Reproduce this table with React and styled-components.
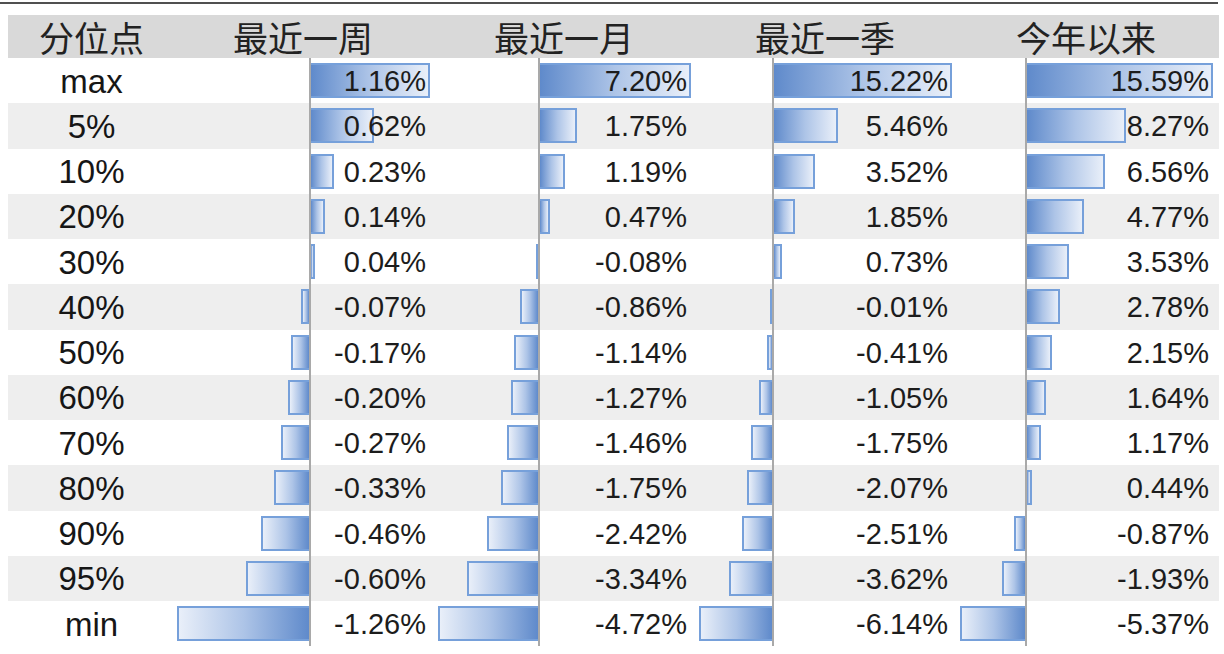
import React from "react";
import styled, { createGlobalStyle } from "styled-components";

const GlobalStyle = createGlobalStyle`
  html, body { margin: 0; padding: 0; background: #ffffff; }
  body { font-family: "Liberation Sans", Arial, sans-serif; }
`;

const LABELS = ["max", "5%", "10%", "20%", "30%", "40%", "50%", "60%", "70%", "80%", "90%", "95%", "min"];

const COLUMNS = [
  { title: "最近一周", values: [1.16, 0.62, 0.23, 0.14, 0.04, -0.07, -0.17, -0.2, -0.27, -0.33, -0.46, -0.6, -1.26] },
  { title: "最近一月", values: [7.2, 1.75, 1.19, 0.47, -0.08, -0.86, -1.14, -1.27, -1.46, -1.75, -2.42, -3.34, -4.72] },
  { title: "最近一季", values: [15.22, 5.46, 3.52, 1.85, 0.73, -0.01, -0.41, -1.05, -1.75, -2.07, -2.51, -3.62, -6.14] },
  { title: "今年以来", values: [15.59, 8.27, 6.56, 4.77, 3.53, 2.78, 2.15, 1.64, 1.17, 0.44, -0.87, -1.93, -5.37] },
];

const Page = styled.div`
  padding-top: 2px;
  width: 1224px;
`;

const TopRule = styled.div`
  width: 1218px;
  height: 2px;
  background: #505050;
`;

const Table = styled.div`
  margin: 11px 0 0 8px;
  width: 1211px;
  display: flex;
  flex-direction: column;
`;

const Row = styled.div`
  display: grid;
  grid-template-columns: 167px repeat(4, 261px);
  height: ${(p) => (p.$header ? "43px" : "45.25px")};
  background: ${(p) => (p.$header ? "#d9d9d9" : p.$shaded ? "#eeeeee" : "#ffffff")};
`;

const HeadCell = styled.div`
  display: flex;
  align-items: center;
  justify-content: center;
  padding-right: ${(p) => (p.$first ? "0" : "5px")};
  font-family: "Noto Sans CJK SC", "Liberation Sans", sans-serif;
  font-size: 35px;
  color: #222222;
  line-height: 1;
`;

const LabelCell = styled.div`
  display: flex;
  align-items: center;
  justify-content: center;
  font-size: 33px;
  color: #161616;
  padding-top: 2px;
`;

const Cell = styled.div`
  display: grid;
  height: 100%;
  & > * {
    grid-area: 1 / 1;
  }
`;

const Track = styled.div`
  display: flex;
  height: 100%;
  padding: 0 6px 0 2px;
  box-sizing: border-box;
`;

const NegSide = styled.div`
  display: flex;
  align-items: center;
  justify-content: flex-end;
  flex-shrink: 0;
`;

const PosSide = styled.div`
  flex: 1;
  display: flex;
  align-items: center;
  justify-content: flex-start;
  border-left: 2px solid #a9a9a9;
`;

const Bar = styled.div`
  height: 35px;
  box-sizing: border-box;
  border: 2px solid #76a0da;
  ${(p) =>
    p.$neg
      ? `border-right: none; background: linear-gradient(to right, #e9eff9 0%, #adc4e7 50%, #5f8acb 100%);`
      : `border-left: none; background: linear-gradient(to right, #5f8acb 0%, #adc4e7 50%, #e9eff9 100%);`}
`;

const ValueText = styled.div`
  justify-self: end;
  align-self: center;
  padding: 2px 10px 0 0;
  font-size: 29px;
  color: #1c1c1c;
`;

const fmt = (v) => `${v.toFixed(2)}%`;

function BarCell({ value, min, max }) {
  const span = max - min;
  const negShare = (-min / span) * 100;
  const neg = value < 0;
  const width = neg ? (-value / -min) * 100 : (value / max) * 100;
  return (
    <Cell>
      <Track>
        <NegSide style={{ flexBasis: `${negShare}%` }}>
          {neg && <Bar $neg style={{ width: `${width}%` }} />}
        </NegSide>
        <PosSide>{!neg && <Bar style={{ width: `${width}%` }} />}</PosSide>
      </Track>
      <ValueText>{fmt(value)}</ValueText>
    </Cell>
  );
}

export default function App() {
  const ranges = COLUMNS.map((c) => ({ min: Math.min(...c.values), max: Math.max(...c.values) }));
  return (
    <Page>
      <GlobalStyle />
      <TopRule />
      <Table>
        <Row $header>
          <HeadCell $first>分位点</HeadCell>
          {COLUMNS.map((c) => (
            <HeadCell key={c.title}>{c.title}</HeadCell>
          ))}
        </Row>
        {LABELS.map((label, i) => (
          <Row key={label} $shaded={i % 2 === 1}>
            <LabelCell>{label}</LabelCell>
            {COLUMNS.map((c, j) => (
              <BarCell key={c.title} value={c.values[i]} min={ranges[j].min} max={ranges[j].max} />
            ))}
          </Row>
        ))}
      </Table>
    </Page>
  );
}
